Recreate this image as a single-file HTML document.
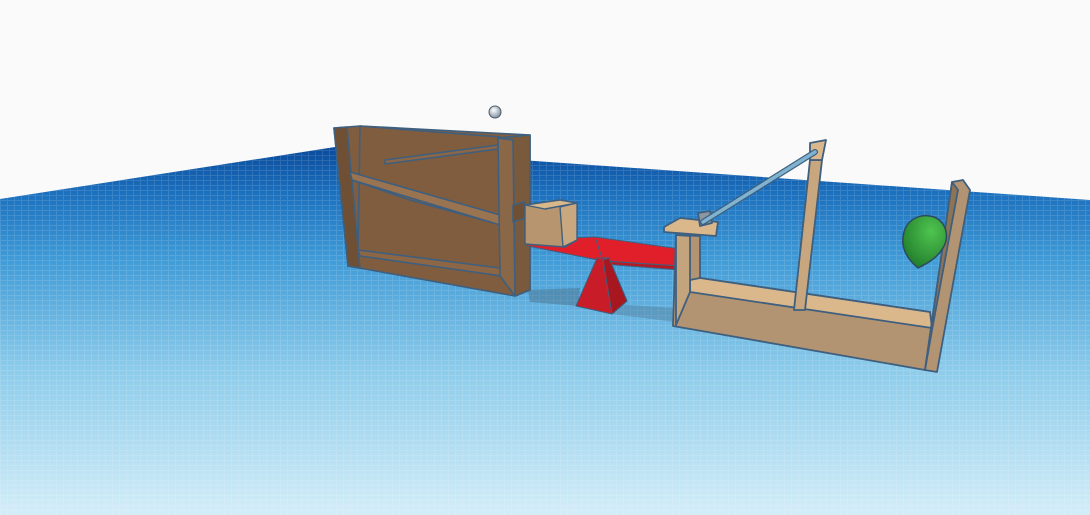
<!DOCTYPE html>
<html><head><meta charset="utf-8"><style>
html,body{margin:0;padding:0;background:#fafafa;overflow:hidden}
svg{display:block}
</style></head><body>
<svg width="1090" height="515" viewBox="0 0 1090 515" xmlns="http://www.w3.org/2000/svg">
<defs>
<linearGradient id="pl" x1="0" y1="148" x2="0" y2="515" gradientUnits="userSpaceOnUse">
<stop offset="0" stop-color="#0a4b9c"/>
<stop offset="0.12" stop-color="#1b6fbd"/>
<stop offset="0.3" stop-color="#3f9ad6"/>
<stop offset="0.6" stop-color="#8ccbea"/>
<stop offset="1" stop-color="#d3edf8"/>
</linearGradient>
<pattern id="gr" width="7" height="5" patternUnits="userSpaceOnUse">
<path d="M0 0.5H7M0.5 0V5" stroke="#ffffff" stroke-opacity="0.12" stroke-width="1"/>
</pattern>
<radialGradient id="bal" cx="0.65" cy="0.3" r="0.8">
<stop offset="0" stop-color="#4fc44f"/><stop offset="1" stop-color="#1f7a2a"/>
</radialGradient>
<radialGradient id="sp" cx="0.4" cy="0.35" r="0.7">
<stop offset="0" stop-color="#ffffff"/><stop offset="1" stop-color="#7a8a99"/>
</radialGradient>
</defs>
<rect width="1090" height="515" fill="#fafafa"/>
<polygon points="0,199 335,147 1090,200 1090,515 0,515" fill="url(#pl)"/>
<polygon points="0,199 335,147 1090,200 1090,515 0,515" fill="url(#gr)"/>

<!-- shadows -->
<polygon points="528,290 580,288 578,306 530,302" fill="#4a6c86" opacity="0.45"/>
<polygon points="612,304 675,308 675,322 612,314" fill="#4a6c86" opacity="0.35"/>

<!-- left structure -->
<g stroke="#3f5f7f" stroke-width="1.6" stroke-linejoin="round">
<polygon points="334,128 360,126 530,135 530,290 515,296 348,266" fill="#7f5d3e"/>
<polygon points="334,128 347,127 360,268 348,266" fill="#6f5034"/>
<polygon points="360,126 500,137 500,276 358,252" fill="#7f5d3e"/>
<polygon points="350,172 500,215 500,225 352,180" fill="#9a7350"/>
<polyline points="352,180 410,200 490,222" fill="none"/>
<polygon points="385,160 498,145 498,149 385,164" fill="#8c6645"/>
<polygon points="358,250 500,268 502,276 360,256" fill="#8c6645"/>
<polygon points="498,138 530,135 530,290 515,296 513,140" fill="#7a5a3c"/>
<polygon points="498,138 513,140 515,296 500,276" fill="#8a6747"/>
<polygon points="513,205 525,202 525,218 513,222" fill="#6f5034"/>
</g>

<!-- seesaw -->
<g stroke="#3f5f7f" stroke-width="1" stroke-linejoin="round">
<polygon points="525,240 595,237 680,249 680,266 603,261 528,246" fill="#e01f2b"/>
<polygon points="603,261 680,266 680,270 603,264" fill="#b51a24"/>
<line x1="595" y1="237" x2="603" y2="261"/>
<polygon points="597,258 576,306 612,314 627,301 609,258" fill="#c81c28"/>
<polygon points="609,258 627,301 612,314 603,260" fill="#a8161f"/>
</g>

<!-- box -->
<g stroke="#3f5f7f" stroke-width="1.4" stroke-linejoin="round">
<polygon points="525,205 560,200 577,203 577,240 565,247 525,244" fill="#b7966f"/>
<polygon points="560,207 577,203 577,240 563,247" fill="#c9a87f"/>
<polygon points="525,205 560,200 577,203 545,209" fill="#d9b88c"/>
</g>

<!-- right structure -->
<g stroke="#3f5f7f" stroke-width="1.8" stroke-linejoin="round">
<polygon points="673,326 676,235 700,236 700,278 930,312 933,370 925,370" fill="#b39472"/>
<polygon points="690,280 700,278 930,312 932,328 690,292" fill="#dbb88c"/>
<polygon points="676,235 690,236 690,292 676,325" fill="#c4a47d"/>
<polygon points="664,227 680,218 718,222 716,236 664,232" fill="#dbb88c"/>
<polygon points="698,213 710,211 712,223 700,226" fill="#8a96a0"/>
<polygon points="794,310 810,160 822,160 805,310" fill="#c9a77e"/>
<polygon points="810,143 826,140 822,160 810,160" fill="#dbb88c"/>
<polygon points="925,370 952,182 963,180 970,190 937,372" fill="#b39472"/>
<polygon points="925,370 952,182 958,190 932,330" fill="#8f7355"/>
</g>
<line x1="703" y1="222" x2="815" y2="152" stroke="#3f5f7f" stroke-width="6" stroke-linecap="round"/>
<line x1="703" y1="222" x2="815" y2="152" stroke="#7fb3cf" stroke-width="3.5" stroke-linecap="round"/>

<!-- balloon -->
<path d="M918 268 C906 258 900 246 904 232 C908 218 922 213 934 217 C946 222 950 236 943 248 C937 258 928 263 918 268 Z" fill="url(#bal)" stroke="#2c4b5f" stroke-width="1.5"/>

<!-- small sphere -->
<circle cx="495" cy="112" r="6" fill="url(#sp)" stroke="#4a5a6a" stroke-width="1"/>
</svg>
</body></html>
